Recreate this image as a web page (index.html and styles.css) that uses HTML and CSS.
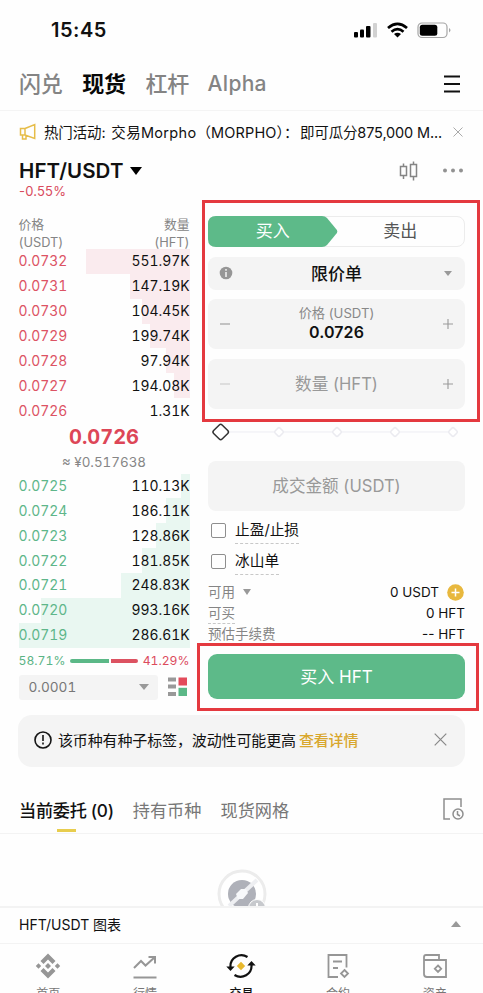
FILE: index.html
```html
<!DOCTYPE html>
<html lang="zh-CN">
<head>
<meta charset="utf-8">
<meta name="viewport" content="width=device-width">
<title>HFT/USDT</title>
<link rel="stylesheet" href="styles.css">
</head>
<body>
<header class="status">
  <span class="clock">15:45</span>
  <svg class="status-icons" width="100" height="20" viewBox="0 0 100 20">
    <rect x="1" y="12" width="4" height="5.5" rx="1"/><rect x="7" y="9.500" width="4" height="8" rx="1"/><rect x="13" y="6" width="4.500" height="11.500" rx="1"/><rect x="20" y="3" width="4" height="14.500" rx="1" fill="#d2d2d2"/>
    <g fill="none" stroke="#000" stroke-width="2.700"><path d="M35 8Q44.500-.2 54 8M38.500 11.700q6-5.200 12 0"/></g><path d="M41 14.100q3.500-2.800 7 0l-3.500 3.500z"/>
    <rect x="65" y="3" width="29" height="14.500" rx="4" fill="none" stroke="#a5a5a5" stroke-width="1.200"/><rect x="66.800" y="4.800" width="17.500" height="11" rx="2.500"/><path d="M96 8q3 2 0 4.500z" fill="#a5a5a5"/>
  </svg>
</header>
<nav class="modes">
  <span class="mode">闪兑</span><span class="mode active">现货</span><span class="mode">杠杆</span><span class="mode latin">Alpha</span>
  <svg class="menu" width="18" height="18" viewBox="0 0 18 18"><path d="M1 1.500h16M1 9h16M1 16.500h16" stroke="#111" stroke-width="2"/></svg>
</nav>
<section class="notice">
  <svg width="18" height="18" viewBox="0 0 18 18" fill="none" stroke="#e6bd49" stroke-width="1.500"><path d="M6 5.500 15.700 1.500v14L6 12H1.500V5.500zM6 5.500V12M3.500 12v4H7v-3.500"/></svg>
  <p class="notice-text"><span>热门活动: <span class="wide">交易Morpho</span></span><span class="paren">（MORPHO）：</span><span class="tail">即可瓜分875,000 M...</span></p>
  <svg class="close-small" width="10" height="10" viewBox="0 0 10 10"><path d="m.5.500 9 9m0-9-9 9" stroke="#aaa"/></svg>
</section>
<section class="pair">
  <div>
    <h1 class="symbol">HFT/USDT <i class="tri large"></i></h1>
    <p class="change">-0.55%</p>
  </div>
  <div class="pair-tools">
    <svg width="20" height="20" viewBox="0 0 20 20" fill="none" stroke="#858585" stroke-width="1.500"><path d="M1.500 5.500h6v9h-6zM4.500 2.500v3m0 9v3.500M11.500 3.500h6v12h-6zM14.500.5v3m0 12v4"/></svg>
    <svg width="20" height="20" viewBox="0 0 20 20" fill="#929292"><circle cx="2" cy="9.500" r="2"/><circle cx="10" cy="9.500" r="2"/><circle cx="18" cy="9.500" r="2"/></svg>
  </div>
</section>
<main class="trade">
  <section class="book">
    <div class="book-head"><p>价格<br>(USDT)</p><p class="right">数量<br>(HFT)</p></div>
    <div class="asks">
      <div class="level"><span class="depth" style="width:104px"></span><span class="price">0.0732</span><span>551.97K</span></div>
      <div class="level"><span class="depth" style="width:60px"></span><span class="price">0.0731</span><span>147.19K</span></div>
      <div class="level"><span class="depth" style="width:48px"></span><span class="price">0.0730</span><span>104.45K</span></div>
      <div class="level"><span class="depth" style="width:40px"></span><span class="price">0.0729</span><span>199.74K</span></div>
      <div class="level"><span class="depth" style="width:24px"></span><span class="price">0.0728</span><span>97.94K</span></div>
      <div class="level"><span class="depth" style="width:16px"></span><span class="price">0.0727</span><span>194.08K</span></div>
      <div class="level"><span class="price">0.0726</span><span>1.31K</span></div>
    </div>
    <div class="last"><strong>0.0726</strong><span>≈ ¥0.517638</span></div>
    <div class="bids">
      <div class="level"><span class="depth" style="width:9px"></span><span class="price">0.0725</span><span>110.13K</span></div>
      <div class="level"><span class="depth" style="width:24px"></span><span class="price">0.0724</span><span>186.11K</span></div>
      <div class="level"><span class="depth" style="width:34px"></span><span class="price">0.0723</span><span>128.86K</span></div>
      <div class="level"><span class="depth" style="width:48px"></span><span class="price">0.0722</span><span>181.85K</span></div>
      <div class="level"><span class="depth" style="width:69px"></span><span class="price">0.0721</span><span>248.83K</span></div>
      <div class="level"><span class="depth" style="width:149px"></span><span class="price">0.0720</span><span>993.16K</span></div>
      <div class="level"><span class="depth" style="width:171px"></span><span class="price">0.0719</span><span>286.61K</span></div>
    </div>
    <div class="ratio"><span class="up">58.71%</span><i class="bar buy"></i><i class="bar sell"></i><span class="down">41.29%</span></div>
    <div class="book-foot">
      <div class="step"><span>0.0001</span><i class="tri step-tri"></i></div>
      <svg width="19" height="20" viewBox="0 0 19 20"><path d="M0 .5h8v4H0zM0 7.500h8v4H0zM0 15h8v4H0z" fill="#999"/><path d="M10.500.5h8.500v8h-8.500z" fill="#e34b5b"/><path d="M10.500 10.800h8.500V19h-8.500z" fill="#5bb887"/></svg>
    </div>
  </section>
  <section class="form">
    <div class="side">
      <svg class="side-fill" width="130" height="31" viewBox="0 0 130 31"><path d="M8 0h106q3 0 5 2l9.500 11.500q1.500 2 0 4L119 29q-2 2-5 2H8q-8 0-8-8V8q0-8 8-8z" fill="#5dba89"/></svg>
      <span class="buy-label">买入</span><span class="sell-label">卖出</span>
    </div>
    <div class="field type">
      <svg width="14" height="14" viewBox="0 0 14 14"><circle cx="7" cy="7" r="6.300" fill="#969696"/><path d="M7 3v1.700M7 6v5" stroke="#eee" stroke-width="1.600"/></svg>
      <b>限价单</b><i class="tri small"></i>
    </div>
    <div class="field tall price-field">
      <svg class="sign" viewBox="0 0 12 12"><path d="M1 6h10"/></svg>
      <div class="stack"><span>价格 (USDT)</span><strong>0.0726</strong></div>
      <svg class="sign" viewBox="0 0 12 12"><path d="M1 6h10M6 1v10"/></svg>
    </div>
    <div class="field tall">
      <svg class="sign faint" viewBox="0 0 12 12"><path d="M1 6h10"/></svg>
      <span class="placeholder">数量 (HFT)</span>
      <svg class="sign" viewBox="0 0 12 12"><path d="M1 6h10M6 1v10"/></svg>
    </div>
    <svg class="slider" width="257" height="20" viewBox="0 0 257 20" fill="#fff"><path d="M22 10h223" stroke="#ededf3"/><g stroke="#ebebf0" stroke-width="1.500"><rect x="67.500" y="6.500" width="7" height="7" rx="1.500" transform="rotate(45 71 10)"/><rect x="125.500" y="6.500" width="7" height="7" rx="1.500" transform="rotate(45 129 10)"/><rect x="183.500" y="6.500" width="7" height="7" rx="1.500" transform="rotate(45 187 10)"/><rect x="241.500" y="6.500" width="7" height="7" rx="1.500" transform="rotate(45 245 10)"/></g><rect x="6.700" y="4" width="12" height="12" rx="2" transform="rotate(45 12.700 10)" stroke="#333" stroke-width="1.500"/></svg>
    <div class="field tall center"><span class="placeholder">成交金额 (USDT)</span></div>
    <div class="check first"><i class="box"></i><span class="dotted">止盈/止损</span></div>
    <div class="check"><i class="box"></i><span class="dotted">冰山单</span></div>
    <dl class="facts">
      <div><dt>可用 <i class="tri tiny"></i></dt><dd>0 USDT <svg class="add" width="17" height="17" viewBox="0 0 17 17"><circle cx="8.500" cy="8.500" r="8.300" fill="#e8b83e"/><path d="M4.500 8.500h8M8.500 4.500v8" stroke="#fff" stroke-width="1.500"/></svg></dd></div>
      <div><dt><span class="dotted">可买</span></dt><dd>0 HFT</dd></div>
      <div><dt>预估手续费</dt><dd>-- HFT</dd></div>
    </dl>
    <button class="submit">买入 HFT</button>
  </section>
  <i class="mark mark-form"></i><i class="mark mark-submit"></i>
</main>
<aside class="alert">
  <svg width="18" height="18" viewBox="0 0 18 18" fill="none" stroke="#151515" stroke-width="1.600"><circle cx="9" cy="9" r="8"/><path d="M9 4v6M9 11.500v2"/></svg>
  <span class="alert-text">该币种有种子标签，波动性可能更高</span><a>查看详情</a>
  <svg class="alert-close" width="13" height="13" viewBox="0 0 13 13"><path d="m.7.700 11.600 11.600m0-11.600L.7 12.300" stroke="#888" stroke-width="1.200"/></svg>
</aside>
<nav class="orders">
  <span class="order active">当前委托 (0)</span><span class="order">持有币种</span><span class="order">现货网格</span>
  <svg width="21" height="23" viewBox="0 0 21 23" fill="none" stroke="#8f8f8f" stroke-width="1.500"><path d="M7 21H1V1h17v8"/><circle cx="15" cy="16" r="5"/><path d="M14.500 13v3.500l2.500 1.500"/></svg>
</nav>
<section class="empty">
  <svg width="50" height="50" viewBox="0 0 50 50"><circle cx="25" cy="25" r="23" fill="#fff" stroke="#ececec" stroke-width="3"/><circle cx="25" cy="25" r="14" fill="#afb1b9"/><path d="M12 37 40 11" stroke="#eeeff2" stroke-width="4"/><path d="m19 25 5-5h5l2 4-5 6h-5z" fill="#f7f8fa"/><circle cx="40" cy="39" r="8.500" fill="#c7c9cd" stroke="#fff"/><path d="M40 34v7" stroke="#fff" stroke-width="2"/></svg>
</section>
<section class="chart-bar"><span>HFT/USDT 图表</span><i class="tri up-tri"></i></section>
<footer class="nav">
  <div class="tab"><svg viewBox="0 0 28 28" fill="#969696"><path d="m14 1.500 7.500 7.500-3 3L14 7.500 9.500 12l-3-3zM14 26.500 6.500 19l3-3 4.500 4.500 4.500-4.500 3 3zM14 11l3 3-3 3-3-3zM4.500 11.300 7.200 14l-2.700 2.700L1.800 14zM23.500 11.300l2.700 2.700-2.700 2.700-2.700-2.700z"/></svg><span>首页</span></div>
  <div class="tab"><svg viewBox="0 0 28 28" fill="none" stroke="#969696" stroke-width="2"><path d="m3 16 7-7 4.500 4.500L24 5M17.500 5H24v6.500M2.500 25.500h23"/></svg><span>行情</span></div>
  <div class="tab active"><svg class="swap" viewBox="0 0 30 28" fill="none" stroke="#111" stroke-width="2.200"><path d="M21.500 5A11 11 0 0 0 4.500 15M8.500 23A11 11 0 0 0 25.500 13"/><path d="M.3 14.500h8.400l-4.200 4.500zM21.300 13.500h8.400L25.500 9z" fill="#111" stroke="none"/><path d="m15 9.800 4.200 4.200-4.200 4.200-4.200-4.200z" fill="#e8b92e" stroke="none"/></svg><span>交易</span></div>
  <div class="tab"><svg viewBox="0 0 28 28" fill="none" stroke="#969696" stroke-width="1.800"><path d="M14 25H4.500V3h18v12.500M9 9.500h9M9 16h5M20.500 18l3.500 3.500-3.500 3.500-3.500-3.500z"/></svg><span>合约</span></div>
  <div class="tab"><svg viewBox="0 0 28 28" fill="none" stroke="#969696" stroke-width="1.800"><path d="M3 8v14q0 3 3 3h19V8H3V5q0-2 2-2h13v5M17 13.500l3.200 3.200-3.200 3.200-3.200-3.200z"/></svg><span>资产</span></div>
</footer>
</body>
</html>
```

FILE: styles.css
```css
* { box-sizing: border-box; }
html, body { margin: 0; height: 993px; overflow: hidden; }
body { width: 483px; background: #fefefe; color: #111; font-family: Inter, "Noto Sans CJK SC", sans-serif; font-size: 14px; display: flex; flex-direction: column; }
body > * { flex-shrink: 0; }
svg { display: block; flex: none; }
p, h1, dl, dd, dt { margin: 0; font-weight: 400; }
i { font-style: normal; }
.tri { display: inline-block; border: 0 solid transparent; border-width: 6px 5px 0; border-top-color: #999; }
.tri.large { border-width: 8px 6px 0; border-top-color: #000; margin-left: 1px; vertical-align: 3px; }
.tri.small { border-width: 5px 4.5px 0; }
.tri.tiny { border-width: 6px 4.5px 0; vertical-align: 2px; margin-left: 4px; }
.tri.up-tri { border-width: 0 5px 6px; border-bottom-color: #999; }

.status { height: 60px; display: flex; justify-content: space-between; align-items: center; padding: 0 31px 0 51px; }
.clock { font-size: 20px; font-weight: 600; letter-spacing: .5px; }
.status-icons { width: 100px; margin-right: -1px; }
.modes { height: 51px; border-bottom: 1px solid #f4f4f4; display: flex; align-items: center; padding: 0 22px 2px 19px; gap: 19.5px; font-size: 22px; line-height: 30px; color: #848484; font-weight: 500; white-space: nowrap; letter-spacing: -.15px; }
.mode.active { color: #080808; font-weight: 700; }
.mode.latin { font-size: 21px; letter-spacing: .3px; margin-left: -1px; }
.menu { margin-left: auto; }
.notice { height: 42px; display: flex; align-items: center; padding: 0 20px 1px 19px; }
.notice-text { display: flex; width: 398px; margin-left: 7px; font-size: 14.5px; white-space: nowrap; letter-spacing: -.15px; }
.wide { letter-spacing: .3px; margin-left: 2px; }
.paren { letter-spacing: .15px; }
.tail { margin-left: auto; }
.close-small { margin-left: auto; }
.pair { height: 52px; padding: 6px 20px 0 19px; display: flex; justify-content: space-between; }
.symbol { font-size: 20.5px; line-height: 24px; font-weight: 600; letter-spacing: .1px; }
.change { color: #d94b5d; font-size: 13px; line-height: 17px; letter-spacing: .2px; }
.pair-tools { display: flex; gap: 24px; padding-top: 2px; }

.trade { position: relative; height: 510px; display: flex; padding: 10px 18px 0 18.500px; gap: 18.500px; }
.book { width: 171px; font-variant-numeric: tabular-nums; }
.book-head { height: 34px; display: flex; justify-content: space-between; color: #858585; font-size: 12.8px; line-height: 18px; padding-top: 1px; }
.right { text-align: right; }
.level { position: relative; height: 24.86px; display: flex; align-items: center; justify-content: space-between; font-size: 13.9px; white-space: nowrap; }
.level span { position: relative; }
.level .depth { position: absolute; right: 0; top: 0; bottom: 0; background: #faebee; }
.bids .depth { background: #e9f7f1; }
.asks .price { color: #dc5364; }
.bids .price { color: #5eb68a; }
.last { height: 50.5px; display: flex; flex-direction: column; align-items: center; color: #868686; line-height: 24px; padding-top: 2px; }
.last strong { color: #dd4657; font-size: 20px; line-height: 25px; font-weight: 700; }
.last span { font-size: 13.4px; }
.bids { height: 174px; }
.ratio { height: 27px; display: flex; align-items: center; gap: 2px; font-size: 12.2px; padding-bottom: 1px; }
.up { color: #5bb486; margin-right: 3px; }
.down { color: #dc4b5c; margin-left: 3px; }
.bar { height: 4px; flex: 41; background: #5bb887; border-radius: 3px 0 0 3px; }
.bar.sell { flex: 29; background: #dc5261; border-radius: 0 3px 3px 0; }
.book-foot { display: flex; gap: 10px; align-items: center; }
.step { width: 139px; height: 25px; background: #f4f4f4; border-radius: 3px; padding: 0 9px 0 10px; display: flex; align-items: center; justify-content: space-between; color: #777; font-size: 13.6px; }

.form { width: 257px; padding-top: 2px; }
.side { position: relative; height: 31px; border: 1px solid #ececec; border-radius: 8px; display: grid; grid-template-columns: 1fr 1fr; align-items: center; text-align: center; font-size: 17px; margin-top: -1.500px; line-height: 25px; }
.side-fill { position: absolute; left: -1px; top: -1px; }
.side span { position: relative; }
.buy-label { color: #fff; }
.sell-label { color: #555; }
.field { background: #f4f4f4; border-radius: 8px; display: flex; align-items: center; justify-content: space-between; padding: 0 11px; }
.field.type { height: 33px; margin-top: 10px; padding-right: 13px; font-size: 17px; }
.type b { font-weight: 500; padding-bottom: 1px; margin-right: 4px; }
.field.tall { height: 50px; margin-top: 10px; }
.field.price-field { margin-top: 9px; }
.field.tall.center { justify-content: center; margin-top: 19px; }
.stack { display: flex; flex-direction: column; align-items: center; color: #888; font-size: 13.2px; line-height: 18px; padding-bottom: 1px; }
.stack strong { color: #111; font-size: 16px; font-weight: 600; line-height: 20px; letter-spacing: .1px; }
.placeholder { color: #999; font-size: 16.6px; padding-bottom: 1px; }
.sign { width: 12px; height: 12px; stroke: #999; stroke-width: 1.1; }
.faint { opacity: .45; }
.slider { margin-top: 13px; }
.check { height: 31px; display: flex; align-items: center; padding-left: 3px; gap: 9px; font-size: 14.7px; }
.check.first { margin-top: 4.500px; }
.box { width: 15px; height: 15px; border: 1px solid #8e8e8e; border-radius: 2px; }
.dotted { border-bottom: 1px dashed #c8c8c8; }
.check .dotted { line-height: 25px; height: 26px; }
.facts { margin-top: 5px; font-size: 13.5px; line-height: 21px; }
.facts div { display: flex; justify-content: space-between; height: 21.2px; }
.facts dt { color: #858585; }
.facts dt .dotted { display: inline-block; height: 21px; }
.facts dd { display: flex; align-items: center; gap: 8px; height: 21px; }
.add { margin-right: 1px; }
.submit { display: block; width: 257px; height: 45px; margin-top: 8.500px; border: 0; border-radius: 9px; background: #5dba89; color: #fff; padding: 0 0 2px; font: 400 17px Inter, "Noto Sans CJK SC", sans-serif; }
.mark { position: absolute; border: 3px solid #e4393f; pointer-events: none; }
.mark-form { left: 202px; top: -5px; width: 278px; height: 222px; }
.mark-submit { left: 197px; top: 438px; width: 282px; height: 68px; }

.alert { margin: 0 18px; height: 52px; border-radius: 14px; background: #f4f4f4; display: flex; align-items: center; padding: 0 18px 3px 16px; font-size: 15px; white-space: nowrap; }
.alert-text { margin-left: 6px; letter-spacing: -.13px; }
.alert a { color: #d9a72d; margin-left: 3px; font-weight: 500; letter-spacing: -.15px; }
.alert-close { margin-left: auto; }
.orders { height: 67px; border-bottom: 1px solid #f3f3f3; display: flex; align-items: center; padding: 18px 19px 0; gap: 19px; font-size: 17.2px; color: #777; white-space: nowrap; }
.order { position: relative; }
.order.active { color: #111; font-weight: 500; letter-spacing: -.3px; }
.order.active::after { content: ""; position: absolute; left: 38px; bottom: -10px; width: 19px; height: 3px; background: #e8cd4e; }
.orders svg { margin-left: auto; }
.empty { height: 72px; overflow: hidden; padding: 35px 0 0 217px; }
.chart-bar { height: 38px; border-top: 2px solid #f3f3f3; border-bottom: 1px solid #f3f3f3; display: flex; align-items: center; justify-content: space-between; padding: 0 22px 3px 19px; font-size: 14px; }
.nav { height: 50px; display: grid; grid-template-columns: repeat(5, 1fr); overflow: hidden; }
.tab { display: flex; flex-direction: column; align-items: center; padding-top: 8px; font-size: 12px; line-height: 18px; color: #777; }
.tab svg { width: 28px; height: 28px; }
.tab .swap { width: 30px; }
.tab span { margin-top: 5px; }
.tab.active { color: #111; font-weight: 500; }
```
